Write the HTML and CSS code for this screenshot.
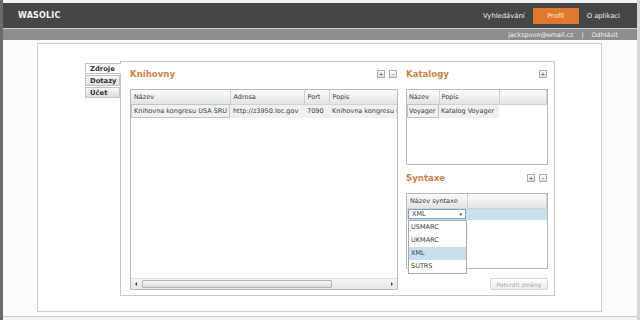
FILE: index.html
```html
<!DOCTYPE html>
<html lang="cs">
<head>
    <meta charset="UTF-8">
    <title>WASOLIC - Profil</title>
    <link rel="stylesheet" href="styles.css">
</head>
<body>
    <div class="topstrip"></div>
    <header class="topbar">
        <div class="logo">WASOLIC</div>
        <nav class="menu">
            <a class="menu-item">Vyhledávání</a>
            <a class="menu-item active">Profil</a>
            <a class="menu-item">O aplikaci</a>
        </nav>
    </header>
    <div class="userbar">
        <span>jackspoon@email.cz</span>
        <span class="sep">|</span>
        <span>Odhlásit</span>
    </div>

    <main class="page">
        <div class="box">
            <!-- Tabs -->
            <div class="tabs">
                <div class="tab active">Zdroje</div>
                <div class="tab">Dotazy</div>
                <div class="tab">Účet</div>
            </div>

            <div class="panel">
                <!-- Knihovny -->
                <section class="col-left">
                    <div class="sec-head">
                        <h2>Knihovny</h2>
                        <div class="tools">
                            <span class="tool">+</span>
                            <span class="tool">-</span>
                        </div>
                    </div>
                    <div class="grid grid-lib">
                        <div class="grid-body">
                            <table class="table-lib">
                                <thead>
                                    <tr>
                                        <th class="w-name">Název</th>
                                        <th class="w-addr">Adresa</th>
                                        <th class="w-port">Port</th>
                                        <th class="w-desc">Popis</th>
                                    </tr>
                                </thead>
                                <tbody>
                                    <tr class="row-sel">
                                        <td class="cell-focus">Knihovna kongresu USA SRU</td>
                                        <td>http://z3950.loc.gov</td>
                                        <td>7090</td>
                                        <td>Knihovna kongresu USA</td>
                                    </tr>
                                </tbody>
                            </table>
                        </div>
                        <div class="hscroll">
                            <span class="arrow arrow-left"></span>
                            <span class="thumb"></span>
                            <span class="arrow arrow-right"></span>
                        </div>
                    </div>
                </section>

                <section class="col-right">
                    <!-- Katalogy -->
                    <div class="sec-head">
                        <h2>Katalogy</h2>
                        <div class="tools">
                            <span class="tool">+</span>
                        </div>
                    </div>
                    <div class="grid grid-small">
                        <table class="table-cat">
                            <thead>
                                <tr>
                                    <th class="w-kname">Název</th>
                                    <th class="w-kdesc">Popis</th>
                                    <th></th>
                                </tr>
                            </thead>
                            <tbody>
                                <tr class="row-sel">
                                    <td class="cell-focus">Voyager</td>
                                    <td>Katalog Voyager</td>
                                    <td class="blank"></td>
                                </tr>
                            </tbody>
                        </table>
                    </div>

                    <!-- Syntaxe -->
                    <div class="sec-head sec-syntax">
                        <h2>Syntaxe</h2>
                        <div class="tools">
                            <span class="tool">+</span>
                            <span class="tool">-</span>
                        </div>
                    </div>
                    <div class="grid grid-small grid-syntax">
                        <table>
                            <thead>
                                <tr>
                                    <th class="w-syn">Název syntaxe</th>
                                    <th></th>
                                </tr>
                            </thead>
                            <tbody>
                                <tr class="row-edit">
                                    <td class="cell-edit">
                                        <div class="select">XML<span class="caret">▾</span></div>
                                    </td>
                                    <td></td>
                                </tr>
                            </tbody>
                        </table>
                        <ul class="dropdown">
                            <li>USMARC</li>
                            <li>UKMARC</li>
                            <li class="hover">XML</li>
                            <li>SUTRS</li>
                        </ul>
                    </div>

                    <div class="actions">
                        <button class="confirm" disabled>Potvrdit změny</button>
                    </div>
                </section>
            </div>
        </div>
    </main>
    <div class="bottomline"></div>
</body>
</html>
```

FILE: styles.css
```css
html, body {
    margin: 0;
    height: 320px;
    overflow: hidden;
}
body {
    font-family: 'DejaVu Sans', 'Verdana', sans-serif;
    font-size: 6.8px;
    color: #3a3a3a;
    background-color: #fbfbfb;
    border-left: 3px solid #6b6b6b;
    border-right: 3px solid #d6d6d6;
    box-sizing: border-box;
}
.topstrip {
    height: 3px;
    background-color: #eef3f6;
}
.topbar {
    height: 25px;
    background-color: #464646;
    display: flex;
    align-items: center;
    justify-content: space-between;
    padding: 0 17px 0 15px;
}
.logo {
    color: #f4f4f4;
    font-weight: bold;
    font-size: 8px;
    letter-spacing: 0.2px;
}
.menu {
    display: flex;
    align-items: center;
    gap: 8px;
}
.menu-item {
    color: #eeeeee;
    font-size: 6.8px;
    line-height: 16px;
}
.menu-item.active {
    background-color: #e2782f;
    width: 46px;
    text-align: center;
    color: #fbe9dc;
}
.userbar {
    height: 11px;
    border-top: 1px solid #cfcfcf;
    background-color: #8f8c8b;
    display: flex;
    justify-content: flex-end;
    align-items: center;
    gap: 8px;
    padding-right: 19px;
    color: #f1f1f1;
    font-size: 6.4px;
}
.page {
    padding: 3px 0 0 34px;
}
.box {
    width: 565px;
    height: 269px;
    box-sizing: border-box;
    border: 1px solid #cdcfcf;
    background-color: #ffffff;
    padding: 17px 0 0 47px;
    display: flex;
    align-items: flex-start;
}
.bottomline {
    margin-top: 4px;
    border-top: 1px solid #c9c9c9;
    height: 4px;
    background-color: #f3f3f3;
}

/* tabs */
.tabs {
    width: 36px;
    margin: 2px -1px 0 0;
    display: flex;
    flex-direction: column;
    gap: 1px;
}
.tab {
    height: 11px;
    line-height: 10px;
    box-sizing: border-box;
    border: 1px solid #c4c4c4;
    background: linear-gradient(#f8f8f8, #dedede);
    font-weight: bold;
    color: #333;
    padding-left: 4px;
    width: 35px;
}
.tab.active {
    width: 36px;
    background: #ffffff;
    border-right: none;
    z-index: 1;
}

/* panel */
.panel {
    width: 435px;
    height: 235px;
    box-sizing: border-box;
    border: 1px solid #c6c6c6;
    background-color: #ffffff;
    padding: 5px 6px 0 9px;
    display: flex;
    gap: 8px;
}
.col-left {
    width: 268px;
}
.col-right {
    width: 142px;
}
.sec-head {
    height: 14px;
    margin-bottom: 8px;
    display: flex;
    justify-content: space-between;
    align-items: center;
}
.sec-head h2 {
    margin: 0;
    font-size: 8.6px;
    color: #c9844a;
    font-weight: bold;
}
.sec-syntax {
    margin-top: 6px;
}
.tools {
    display: flex;
    gap: 4px;
    padding-right: 1px;
}
.tool {
    width: 8px;
    height: 8px;
    box-sizing: border-box;
    border: 1px solid #aaaaaa;
    background: linear-gradient(#ffffff, #e2e2e2);
    font-size: 6px;
    line-height: 6px;
    text-align: center;
    color: #444;
}

/* grids */
.grid {
    box-sizing: border-box;
    border: 1px solid #b9b9b9;
    background-color: #ffffff;
    position: relative;
}
.grid-lib {
    height: 201px;
    display: flex;
    flex-direction: column;
    justify-content: space-between;
}
.grid-body {
    overflow: hidden;
}
.grid-small {
    height: 76px;
}
table {
    border-collapse: collapse;
    table-layout: fixed;
    width: 100%;
    font-size: 6.5px;
    color: #3c3c3c;
}
th, td {
    box-sizing: border-box;
    padding: 0 3px;
    white-space: nowrap;
    overflow: hidden;
    text-align: left;
}
th {
    height: 14px;
    font-weight: normal;
    background: linear-gradient(#fbfbfb, #e3e3e3);
    border-right: 1px solid #cfcfcf;
    border-bottom: 1px solid #d2d2d2;
}
td {
    height: 14px;
}
.table-lib {
    width: 280px;
}
.w-name { width: 99px; }
.w-addr { width: 74px; }
.w-port { width: 25px; }
.w-desc { width: 82px; }
.w-kname { width: 32px; }
.w-kdesc { width: 60px; }
.w-syn { width: 60px; }
.table-cat th, .table-cat td {
    padding: 0 1px 0 2px;
}
.row-sel td {
    background-color: #eef0f1;
}
.row-sel td.blank {
    background-color: #ffffff;
}
.cell-focus {
    outline: 1px solid #b7c8d3;
    outline-offset: -1px;
}
.row-edit td {
    height: 12px;
    background-color: #c7e0ec;
}
.row-edit .cell-edit {
    padding: 0 1px;
}
.select {
    height: 10px;
    line-height: 9px;
    box-sizing: border-box;
    border: 1px solid #7fa3bd;
    background-color: #ffffff;
    padding: 0 3px;
    display: flex;
    justify-content: space-between;
}
.caret {
    font-size: 5px;
    color: #333;
}
.dropdown {
    position: absolute;
    top: 26px;
    left: 1px;
    width: 59px;
    margin: 0;
    padding: 0;
    list-style: none;
    box-sizing: border-box;
    border: 1px solid #a9a9a9;
    background-color: #ffffff;
    font-size: 6.5px;
    z-index: 2;
}
.dropdown li {
    height: 13px;
    line-height: 13px;
    padding-left: 2px;
}
.dropdown li.hover {
    background-color: #c7e0ec;
}

/* scrollbar */
.hscroll {
    height: 10px;
    display: flex;
    align-items: center;
    background: linear-gradient(#f4f4f4, #e6e6e6);
    border-top: 1px solid #dddddd;
}
.arrow {
    width: 10px;
    height: 10px;
    display: flex;
    align-items: center;
    justify-content: center;
}
.arrow-left::before {
    content: '';
    border: 2px solid transparent;
    border-right: 2px solid #444;
    margin-left: -2px;
}
.arrow-right::before {
    content: '';
    border: 2px solid transparent;
    border-left: 2px solid #444;
    margin-right: -2px;
}
.thumb {
    width: 190px;
    height: 8px;
    margin-left: 1px;
    box-sizing: border-box;
    border: 1px solid #b5b5b5;
    border-radius: 1px;
    background: linear-gradient(#f8f8f8, #dcdcdc);
}
.hscroll .arrow-right {
    margin-left: auto;
}

/* actions */
.actions {
    display: flex;
    justify-content: flex-end;
    margin-top: 9px;
}
.confirm {
    width: 58px;
    height: 12px;
    padding: 0;
    border: 1px solid #d4d4d4;
    border-radius: 1px;
    background: linear-gradient(#fdfdfd, #ececec);
    font-family: inherit;
    font-size: 6px;
    color: #a8a8a8;
}
```
